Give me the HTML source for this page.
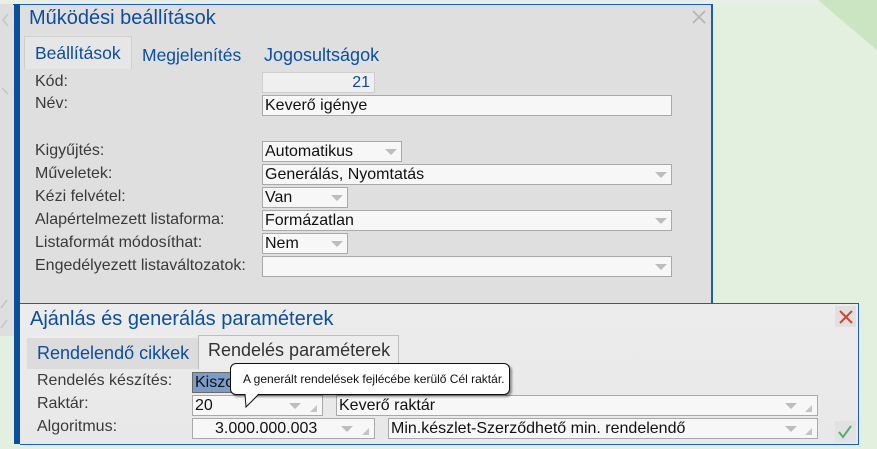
<!DOCTYPE html>
<html><head><meta charset="utf-8"><style>
*{box-sizing:border-box;margin:0;padding:0}
body{width:877px;height:449px;overflow:hidden;background:#e3efdf;font-family:"Liberation Sans",Arial,sans-serif;position:relative}
.a{position:absolute}
.lbl{position:absolute;left:35px;font-size:16px;color:#3a3a3a;line-height:18px}
.in{position:absolute;background:#f7f7f7;border:1px solid #a9a9a9;font-size:16px;color:#111;line-height:19px;padding-left:2px;white-space:nowrap;overflow:hidden}
.arr{position:absolute;width:0;height:0;border-left:6px solid transparent;border-right:6px solid transparent;border-top:6px solid #bdbdbd;top:7px}
.grip{position:absolute;width:0;height:0;border-left:7px solid transparent;border-bottom:7px solid #c4c4c4;bottom:3px}
</style></head><body>
<div class="a" style="left:0;top:0;width:877px;height:4px;background:#e8f0e6"></div>
<svg class="a" style="left:810px;top:0" width="67" height="52"><polygon points="8,0 67,0 67,50" fill="#cbe4c2"/></svg>
<div class="a" style="left:0;top:4px;width:14px;height:332px;background:#dedede"></div>
<svg class="a" style="left:0;top:8px" width="14" height="330"><path d="M8 6 L3 12 L8 18" stroke="#c6c6c6" fill="none" stroke-width="1.5"/><path d="M2 80 L8 86" stroke="#c6c6c6" stroke-width="1.5"/><path d="M1 300 L7 292 M1 320 L7 312" stroke="#c6c6c6" stroke-width="1.5"/></svg>
<!-- dialog 1 -->
<div class="a" style="left:13px;top:4px;width:700px;height:332px;background:#dfdfdf;border-top:1px solid #1a5fb4;border-right:2px solid #1a5fb4"></div>
<div class="a" style="left:14px;top:4px;width:6px;height:440px;background:#0a4f9c"></div>
<div class="a" style="left:29px;top:7px;font-size:20px;color:#0b4ea2">Működési beállítások</div>
<svg class="a" style="left:691px;top:9px" width="16" height="16"><path d="M2 2 L14 14 M14 2 L2 14" stroke="#b5b5b5" stroke-width="1.8"/></svg>
<div class="a" style="left:24px;top:36px;width:108px;height:33px;background:#e6e6e6;border:1px solid #cfcfcf;border-bottom:none"></div>
<div class="a" style="left:35px;top:43px;font-size:17.5px;color:#0b4ea2">Beállítások</div>
<div class="a" style="left:142px;top:45px;font-size:17.5px;color:#0b4ea2">Megjelenítés</div>
<div class="a" style="left:264px;top:45px;font-size:18px;color:#0b4ea2">Jogosultságok</div>
<div class="lbl" style="top:73px">Kód:</div>
<div class="in" style="left:262px;top:72px;width:113px;height:21px;background:#efefef;border-color:#cfcfcf;text-align:right;padding-right:4px;color:#0b4ea2">21</div>
<div class="lbl" style="top:95px">Név:</div>
<div class="in" style="left:262px;top:95px;width:410px;height:21px">Keverő igénye</div>
<div class="lbl" style="top:142px">Kigyűjtés:</div>
<div class="in" style="left:262px;top:141px;width:140px;height:21px">Automatikus<div class="arr" style="left:122px"></div></div>
<div class="lbl" style="top:165px">Műveletek:</div>
<div class="in" style="left:262px;top:164px;width:410px;height:21px">Generálás, Nyomtatás<div class="arr" style="left:392px"></div></div>
<div class="lbl" style="top:188px">Kézi felvétel:</div>
<div class="in" style="left:262px;top:187px;width:86px;height:21px">Van<div class="arr" style="left:68px"></div></div>
<div class="lbl" style="top:211px">Alapértelmezett listaforma:</div>
<div class="in" style="left:262px;top:210px;width:410px;height:21px">Formázatlan<div class="arr" style="left:392px"></div></div>
<div class="lbl" style="top:234px">Listaformát módosíthat:</div>
<div class="in" style="left:262px;top:233px;width:86px;height:21px">Nem<div class="arr" style="left:68px"></div></div>
<div class="lbl" style="top:257px">Engedélyezett listaváltozatok:</div>
<div class="in" style="left:262px;top:256px;width:410px;height:21px"><div class="arr" style="left:392px"></div></div>
<!-- dialog 2 -->
<div class="a" style="left:20px;top:303px;width:839px;height:142px;background:linear-gradient(#ececec,#e8e8e8);border:1px solid #1a5fb4;border-left:none"></div>
<div class="a" style="left:30px;top:308px;font-size:20px;color:#0b4ea2">Ajánlás és generálás paraméterek</div>
<div class="a" style="left:835px;top:306px;width:21px;height:21px;background:#e0e0e0"></div>
<svg class="a" style="left:838px;top:309px" width="16" height="16"><path d="M2 2 L14 14 M14 2 L2 14" stroke="#d2452f" stroke-width="2"/></svg>
<div class="a" style="left:27px;top:338px;width:171px;height:31px;background:#dcdcdc"></div>
<div class="a" style="left:37px;top:343px;font-size:18px;color:#0b4ea2">Rendelendő cikkek</div>
<div class="a" style="left:198px;top:335px;width:201px;height:34px;background:#ededed;border:1px solid #bdbdbd;border-bottom:none"></div>
<div class="a" style="left:208px;top:340px;font-size:18px;color:#333">Rendelés paraméterek</div>
<div class="lbl" style="left:37px;top:372px">Rendelés készítés:</div>
<div class="in" style="left:192px;top:372px;width:60px;height:21px;background:#7a9cc9;border-color:#6a6a6a;color:#111">Kiszo</div>
<div class="lbl" style="left:37px;top:395px">Raktár:</div>
<div class="in" style="left:192px;top:395px;width:131px;height:21px">20<div class="arr" style="left:96px"></div><div class="grip" style="left:117px"></div></div>
<div class="in" style="left:336px;top:395px;width:482px;height:21px">Keverő raktár<div class="arr" style="left:448px"></div><div class="grip" style="left:468px"></div></div>
<div class="lbl" style="left:37px;top:418px">Algoritmus:</div>
<div class="in" style="left:192px;top:418px;width:183px;height:21px;padding-left:22px">3.000.000.003<div class="arr" style="left:148px"></div><div class="grip" style="left:169px"></div></div>
<div class="in" style="left:388px;top:418px;width:430px;height:21px">Min.készlet-Szerződhető min. rendelendő<div class="arr" style="left:396px"></div><div class="grip" style="left:416px"></div></div>
<div class="a" style="left:835px;top:421px;width:21px;height:21px;background:#e2e2e2"></div>
<svg class="a" style="left:836px;top:422px" width="18" height="18"><path d="M3 10 L7 15 L15 4" stroke="#5aaa6e" fill="none" stroke-width="2"/></svg>
<!-- tooltip -->
<div class="a" style="left:230px;top:363px;width:280px;height:32px;background:#fff;border:1px solid #111;border-radius:6px;box-shadow:2px 2px 2px rgba(0,0,0,.4);font-size:12px;line-height:30px;padding-left:12px;color:#111">A generált rendelések fejlécébe kerülő Cél raktár.</div>
<svg class="a" style="left:240px;top:393px" width="24" height="16"><polygon points="5,0 19,0 6,14" fill="#fff"/><path d="M5 1 L6 14 L19 1" stroke="#111" fill="none"/></svg>
</body></html>
